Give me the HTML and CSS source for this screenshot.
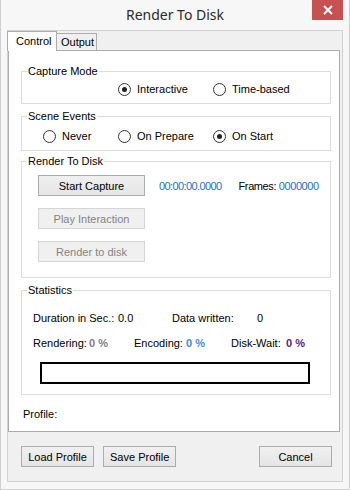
FILE: index.html
```html
<!DOCTYPE html>
<html lang="en">
<head>
    <meta charset="UTF-8">
    <title>Render To Disk</title>
    <link rel="stylesheet" href="styles.css">
</head>
<body>
    <div class="window">
        <div class="titlebar">
            <span></span>
            <span class="title">Render To Disk</span>
            <button class="close" title="Close">
                <svg width="10" height="10" viewBox="0 0 10 10">
                    <path d="M1 1 L9 9 M9 1 L1 9" stroke="#fff" stroke-width="2"/>
                </svg>
            </button>
        </div>

        <div class="client">
            <div class="tabs">
                <div class="tab active">Control</div>
                <div class="tab">Output</div>
            </div>

            <div class="panel">
                <fieldset class="group capture">
                    <legend>Capture Mode</legend>
                    <div class="radios">
                        <label class="radio col2"><span class="dot checked"></span>Interactive</label>
                        <label class="radio"><span class="dot"></span>Time-based</label>
                    </div>
                </fieldset>

                <fieldset class="group events">
                    <legend>Scene Events</legend>
                    <div class="radios">
                        <label class="radio"><span class="dot"></span>Never</label>
                        <label class="radio"><span class="dot"></span>On Prepare</label>
                        <label class="radio"><span class="dot checked"></span>On Start</label>
                    </div>
                </fieldset>

                <fieldset class="group render">
                    <legend>Render To Disk</legend>
                    <div class="render-body">
                        <div class="render-row">
                            <button class="btn wide">Start Capture</button>
                            <span class="timer">00:00:00.0000</span>
                            <span class="frames">Frames: <span class="blue">0000000</span></span>
                        </div>
                        <button class="btn wide" disabled>Play Interaction</button>
                        <button class="btn wide" disabled>Render to disk</button>
                    </div>
                </fieldset>

                <fieldset class="group stats">
                    <legend>Statistics</legend>
                    <div class="stats-body">
                        <div class="stat-row">
                            <span class="w85">Duration in Sec.:</span>
                            <span class="w54">0.0</span>
                            <span class="w85">Data written:</span>
                            <span>0</span>
                        </div>
                        <div class="stat-row">
                            <span class="w56">Rendering:</span>
                            <span class="w45 val gray">0 %</span>
                            <span class="w52">Encoding:</span>
                            <span class="w45 val light">0 %</span>
                            <span class="w55">Disk-Wait:</span>
                            <span class="val purple">0 %</span>
                        </div>
                        <div class="progress"></div>
                    </div>
                </fieldset>

                <p class="profile">Profile:</p>
            </div>

            <div class="footer">
                <button class="btn">Load Profile</button>
                <button class="btn">Save Profile</button>
                <span class="spacer"></span>
                <button class="btn">Cancel</button>
            </div>
        </div>
    </div>
</body>
</html>
```

FILE: styles.css
```css
/* Window frame */
body {
    margin: 0;
    font-family: 'Liberation Sans', Arial, sans-serif;
    font-size: 11px;
    color: #000;
}

.window {
    width: 350px;
    height: 490px;
    box-sizing: border-box;
    background-color: #f7f7f7;
    border: 1px solid #cfcfcf;
    border-top: none;
}

.titlebar {
    height: 30px;
    display: grid;
    grid-template-columns: 1fr auto 1fr;
    align-items: start;
}

.title {
    font-family: 'Noto Sans', sans-serif;
    font-size: 14px;
    line-height: 30px;
    color: #2b2b2b;
}

.close {
    justify-self: end;
    width: 31px;
    height: 20px;
    margin-right: 6px;
    padding: 0;
    border: none;
    background-color: #c75050;
    display: flex;
    align-items: center;
    justify-content: center;
}

.client {
    margin-left: 6px;
    width: 336px;
    height: 452px;
    box-sizing: border-box;
    background-color: #f0f0f0;
    border: 1px solid #d2d2d2;
}

/* Tabs */
.tabs {
    display: flex;
    align-items: flex-end;
    height: 19px;
    margin-left: -1px;
}

.tab {
    box-sizing: border-box;
    border: 1px solid #acacac;
    border-bottom: none;
    background-color: #f0f0f0;
    height: 17px;
    width: 41px;
    margin-left: -1px;
    padding-left: 4px;
    line-height: 17px;
}

.tab.active {
    position: relative;
    z-index: 1;
    width: 50px;
    height: 20px;
    margin-left: 0;
    margin-bottom: -1px;
    padding-left: 8px;
    line-height: 18px;
    background-color: #fff;
}

.panel {
    box-sizing: border-box;
    width: 332px;
    height: 382px;
    background-color: #fff;
    border: 1px solid #acacac;
    padding: 14px 0 0 12px;
}

/* Group boxes */
.group {
    box-sizing: border-box;
    width: 310px;
    min-inline-size: 0;
    margin: 0;
    border: 1px solid #dcdcdc;
    padding: 0;
}

.group legend {
    margin-left: 5px;
    padding: 0 1px;
    line-height: 13px;
}

.capture {
    padding: 3px 0 6px;
}

.events {
    margin-top: 6px;
    padding: 5px 0 6px;
}

.render {
    margin-top: 4px;
}

.render-body {
    padding: 7px 0 15px 16px;
    display: flex;
    flex-direction: column;
    align-items: flex-start;
    gap: 12px;
}

.stats {
    margin-top: 6px;
}

.stats-body {
    padding: 15px 0 10px 11px;
    display: flex;
    flex-direction: column;
    gap: 12px;
}

/* Radio buttons */
.radios {
    display: grid;
    grid-template-columns: 75px 95px auto;
    padding-left: 21px;
    height: 16px;
}

.radio {
    display: flex;
    align-items: center;
    gap: 6px;
}

.radio.col2 {
    grid-column: 2;
}

.dot {
    box-sizing: border-box;
    width: 13px;
    height: 13px;
    border: 1px solid #333;
    border-radius: 50%;
    background-color: #fff;
    display: flex;
    align-items: center;
    justify-content: center;
}

.dot.checked::after {
    content: "";
    width: 5px;
    height: 5px;
    border-radius: 50%;
    background-color: #222;
}

/* Buttons */
.btn {
    box-sizing: border-box;
    height: 21px;
    min-width: 73px;
    padding: 0 6px;
    font-family: inherit;
    font-size: 11px;
    color: #000;
    border: 1px solid #acacac;
    background: linear-gradient(#f0f0f0, #e5e5e5);
}

.btn.wide {
    width: 107px;
}

.btn:disabled {
    color: #838383;
    border-color: #d5d5d5;
    background: #f0f0f0;
}

.render-row {
    display: flex;
    align-items: center;
}

.timer {
    margin-left: 14px;
    color: #1c6fc0;
    letter-spacing: -0.6px;
}

.frames {
    margin-left: 17px;
    letter-spacing: -0.4px;
}

.blue {
    color: #1c6fc0;
}

/* Statistics */
.stat-row {
    display: flex;
    line-height: 13px;
    white-space: nowrap;
}

.w85 { width: 85px; }
.w54 { width: 54px; }
.w56 { width: 56px; }
.w52 { width: 52px; }
.w55 { width: 55px; }
.w45 { width: 45px; }

.val {
    font-weight: bold;
}

.gray { color: #7f7f7f; }
.light { color: #4a89dc; }
.purple { color: #55248a; }

.progress {
    box-sizing: border-box;
    width: 270px;
    height: 22px;
    margin-left: 7px;
    border: 2px solid #000;
    background-color: #fff;
}

.profile {
    margin: 13px 0 0 2px;
    line-height: 13px;
}

/* Bottom buttons */
.footer {
    display: flex;
    gap: 9px;
    padding: 14px 10px 0 13px;
}

.spacer {
    flex: 1;
}
```
